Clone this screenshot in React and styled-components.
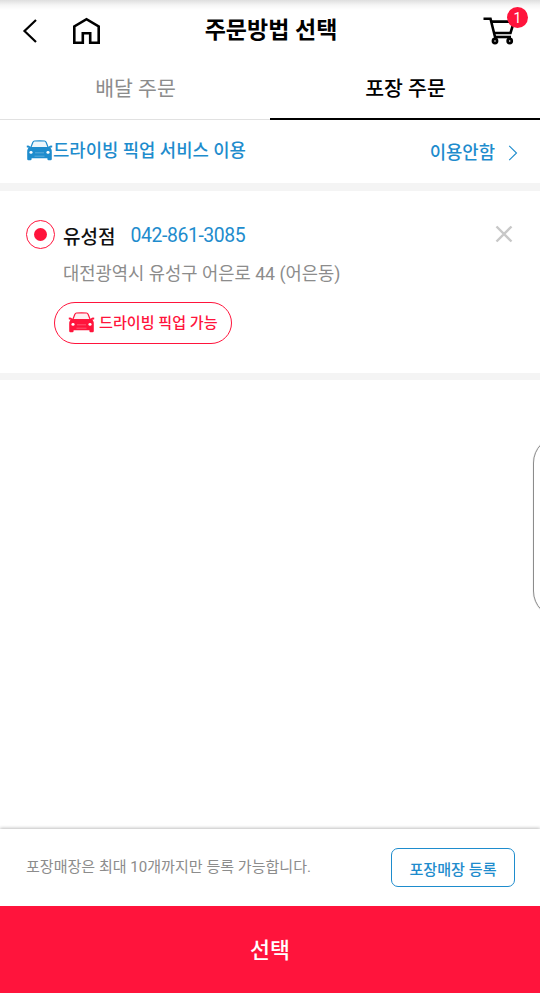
import styled, { createGlobalStyle } from "styled-components";

const RED = "#ff143c";
const BLUE = "#1e8ccd";

const GlobalStyle = createGlobalStyle`
  * {
    box-sizing: border-box;
  }
  body {
    margin: 0;
    background: #fff;
    font-family: Roboto, "Noto Sans CJK KR", sans-serif;
  }
  button {
    font-family: inherit;
    padding: 0;
    border: 0;
    background: none;
  }
  svg {
    display: block;
    flex-shrink: 0;
  }
`;

const Screen = styled.div`
  position: relative;
  display: flex;
  flex-direction: column;
  height: 993px;
  overflow: hidden;
  background: #fff;
`;

const Header = styled.header`
  display: grid;
  grid-template-columns: 1fr auto 1fr;
  align-items: center;
  height: 60px;
  padding: 0 12px 0 14px;
  background: linear-gradient(#dedede, #f5f5f5 5px, #fff 10px);
`;

const HeaderIcons = styled.div`
  display: flex;
  align-items: center;
  gap: 34px;
  padding: 1px 0 0 8px;
`;

const Title = styled.h1`
  margin: 0;
  padding-top: 2px;
  font-size: 23px;
  font-weight: 700;
  line-height: 30px;
  color: #000;
`;

const CartButton = styled.button`
  position: relative;
  justify-self: end;
  width: 45px;
  height: 30px;
`;

const Badge = styled.span`
  position: absolute;
  top: -8px;
  right: 0;
  width: 21px;
  height: 21px;
  border-radius: 50%;
  background: ${RED};
  color: #fff;
  font-size: 14px;
  line-height: 22px;
  text-align: center;
`;

const Tabs = styled.nav`
  display: flex;
  height: 60px;
`;

const Tab = styled.button`
  flex: 1;
  height: 60px;
  padding: 0 0 ${(props) => (props.$active ? "4px" : "5px")} 1px;
  border-bottom: ${(props) => (props.$active ? "2px solid #000" : "1px solid #e1e1e1")};
  color: ${(props) => (props.$active ? "#000" : "#8c8c8c")};
  font-size: 20.5px;
  font-weight: ${(props) => (props.$active ? 500 : 400)};
`;

const ServiceRow = styled.div`
  display: flex;
  align-items: center;
  justify-content: space-between;
  height: 63px;
  padding: 0 22px 0 26px;
  color: ${BLUE};
  font-size: 17.75px;
  font-weight: 500;
`;

const ServiceName = styled.div`
  display: flex;
  align-items: center;
  line-height: 26px;
  padding-bottom: 1px;
`;

const ServiceState = styled.div`
  display: flex;
  align-items: center;
  gap: 13px;
  line-height: 26px;
  padding-top: 3px;
`;

const Divider = styled.div`
  height: ${(props) => props.$size}px;
  background: #f4f4f4;
`;

const Store = styled.section`
  display: flex;
  align-items: flex-start;
  height: 182px;
  padding: 28px 27px 0 26px;
`;

const Radio = styled.span`
  display: flex;
  align-items: center;
  justify-content: center;
  width: 29px;
  height: 29px;
  margin-top: 1px;
  border: 1px solid ${RED};
  border-radius: 50%;

  &::after {
    content: "";
    width: 13px;
    height: 13px;
    border-radius: 50%;
    background: ${RED};
  }
`;

const StoreInfo = styled.div`
  flex: 1;
  padding-left: 8px;
`;

const StoreTitle = styled.div`
  display: flex;
  align-items: center;
  gap: 15px;
  height: 32px;
  font-size: 19px;
`;

const StoreName = styled.strong`
  font-weight: 500;
  color: #111;
`;

const Phone = styled.span`
  padding-top: 1px;
  color: ${BLUE};
  font-size: 19.4px;
  letter-spacing: -0.4px;
`;

const Address = styled.div`
  margin-top: 10px;
  color: #8c8c8c;
  font-size: 17.7px;
  line-height: 26px;
`;

const PickupPill = styled.div`
  display: flex;
  align-items: center;
  gap: 4px;
  width: 178px;
  height: 42px;
  margin: 15px 0 0 -9px;
  padding-left: 13px;
  border: 1px solid ${RED};
  border-radius: 21px;
  color: ${RED};
  font-size: 15.1px;
  font-weight: 500;
`;

const PillLabel = styled.span`
  padding-bottom: 5px;
`;

const CloseButton = styled.button`
  margin-top: 6px;
`;

const EdgeHandle = styled.div`
  position: absolute;
  top: 436px;
  right: -47px;
  width: 54px;
  height: 182px;
  border: 1px solid #8c8c8c;
  border-radius: 27px;
  box-shadow: 0 0 1px rgba(0, 0, 0, 0.3);
`;

const Footer = styled.footer`
  display: flex;
  align-items: center;
  justify-content: space-between;
  height: 77px;
  margin-top: auto;
  padding: 0 25px 0 26px;
  box-shadow: 0 -1px 3px rgba(0, 0, 0, 0.25);
`;

const Notice = styled.p`
  margin: 0 0 4px;
  color: #8c8c8c;
  font-size: 15.05px;
`;

const RegisterButton = styled.button`
  width: 124px;
  height: 39px;
  border: 1px solid ${BLUE};
  border-radius: 7px;
  color: ${BLUE};
  font-size: 15.1px;
  font-weight: 500;
`;

const SelectButton = styled.button`
  height: 87px;
  padding-bottom: 2px;
  background: ${RED};
  color: #fff;
  font-size: 21.7px;
  font-weight: 500;
`;

function BackIcon() {
  return (
    <svg width="16" height="24" viewBox="0 0 16 24" fill="none" stroke="#000" strokeWidth="2.2">
      <path d="M14 1 L2.5 12 L14 23" />
    </svg>
  );
}

function HomeIcon() {
  return (
    <svg width="28" height="28" viewBox="0 0 28 28" fill="none" stroke="#000" strokeWidth="2.6">
      <path d="M2.3 25.7 V9.5 L14.5 2.2 L26.7 9.5 V25.7 H18.2 V16.2 H10.8 V25.7 Z" />
    </svg>
  );
}

function CartIcon() {
  return (
    <svg width="34" height="30" viewBox="0 0 34 30" fill="none" stroke="#000" strokeWidth="2.6">
      <path d="M.5 3.7 H7.5 L12.3 23" />
      <path d="M8 6.6 H31 L27.5 18 H11.2" />
      <path d="M12 22 H28" />
      <circle cx="12" cy="26" r="2.1" />
      <circle cx="26.7" cy="26" r="2.1" />
    </svg>
  );
}

function CarIcon() {
  return (
    <svg width="27" height="22" viewBox="0 0 27 22">
      <path
        d="M4.8 7.5 L7 2 Q7.3 1.1 8.5 1 Q13.5 .6 18.5 1 Q19.7 1.1 20 2 L22.2 7.5"
        fill="currentColor"
        fillOpacity=".08"
        stroke="currentColor"
        strokeWidth="1.2"
      />
      <path
        d="M.7 5.8 Q2.5 5 4 6.4 L4.8 7 H22.2 L23 6.4 Q24.5 5 26.3 5.8 L26.1 7.4 H24.4 Q25.8 9.2 25.8 12 V19 Q25.8 20.3 24.6 20.3 H22.6 Q21.4 20.3 21.4 19 V18.3 H5.6 V19 Q5.6 20.3 4.4 20.3 H2.4 Q1.2 20.3 1.2 19 V12 Q1.2 9.2 2.6 7.4 H.9 Z"
        fill="currentColor"
      />
      <ellipse cx="5" cy="12.4" rx="1.6" ry="1.4" fill="#fff" />
      <ellipse cx="22" cy="12.4" rx="1.6" ry="1.4" fill="#fff" />
      <path d="M9 12.8 H18 M8.5 16.2 H18.5" stroke="#fff" strokeWidth=".7" opacity=".4" />
    </svg>
  );
}

function ArrowIcon() {
  return (
    <svg width="10" height="16" viewBox="0 0 10 16" fill="none" stroke={BLUE} strokeWidth="1.1">
      <path d="M1.2 .8 L8.5 8 L1.2 15.2" />
    </svg>
  );
}

function CloseIcon() {
  return (
    <svg width="18" height="18" viewBox="0 0 18 18" stroke="#c8c8c8" strokeWidth="2.4">
      <path d="M1.5 1.5 L16.5 16.5 M16.5 1.5 L1.5 16.5" />
    </svg>
  );
}

function App() {
  return (
    <Screen>
      <GlobalStyle />
      <Header>
        <HeaderIcons>
          <BackIcon />
          <HomeIcon />
        </HeaderIcons>
        <Title>주문방법 선택</Title>
        <CartButton>
          <CartIcon />
          <Badge>1</Badge>
        </CartButton>
      </Header>

      <Tabs>
        <Tab>배달 주문</Tab>
        <Tab $active>포장 주문</Tab>
      </Tabs>

      <ServiceRow>
        <ServiceName>
          <CarIcon />
          드라이빙 픽업 서비스 이용
        </ServiceName>
        <ServiceState>
          이용안함
          <ArrowIcon />
        </ServiceState>
      </ServiceRow>
      <Divider $size={8} />

      <Store>
        <Radio />
        <StoreInfo>
          <StoreTitle>
            <StoreName>유성점</StoreName>
            <Phone>042-861-3085</Phone>
          </StoreTitle>
          <Address>대전광역시 유성구 어은로 44 (어은동)</Address>
          <PickupPill>
            <CarIcon />
            <PillLabel>드라이빙 픽업 가능</PillLabel>
          </PickupPill>
        </StoreInfo>
        <CloseButton>
          <CloseIcon />
        </CloseButton>
      </Store>
      <Divider $size={7} />

      <EdgeHandle />

      <Footer>
        <Notice>포장매장은 최대 10개까지만 등록 가능합니다.</Notice>
        <RegisterButton>포장매장 등록</RegisterButton>
      </Footer>
      <SelectButton>선택</SelectButton>
    </Screen>
  );
}

export default App;
